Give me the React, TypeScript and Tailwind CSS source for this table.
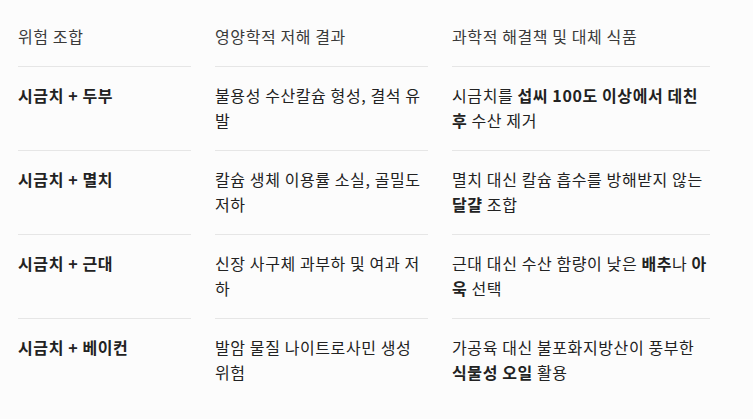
const rows = [
  {
    combo: "시금치 + 두부",
    effect: "불용성 수산칼슘 형성, 결석 유발",
    fix: (
      <>
        시금치를 <b className="font-bold">섭씨 100도 이상에서 데친 후</b> 수산 제거
      </>
    ),
  },
  {
    combo: "시금치 + 멸치",
    effect: "칼슘 생체 이용률 소실, 골밀도 저하",
    fix: (
      <>
        멸치 대신 칼슘 흡수를 방해받지 않는 <b className="font-bold">달걀</b> 조합
      </>
    ),
  },
  {
    combo: "시금치 + 근대",
    effect: "신장 사구체 과부하 및 여과 저하",
    fix: (
      <>
        근대 대신 수산 함량이 낮은 <b className="font-bold">배추</b>나 <b className="font-bold">아욱</b> 선택
      </>
    ),
  },
  {
    combo: "시금치 + 베이컨",
    effect: "발암 물질 나이트로사민 생성 위험",
    fix: (
      <>
        가공육 대신 불포화지방산이 풍부한 <b className="font-bold">식물성 오일</b> 활용
      </>
    ),
  },
];

const App = () => {
  return (
    <div
      className="min-h-screen bg-[#fcfcfc] text-[#222222] pl-[18px] pt-[8px] text-[16px] leading-[25.5px] tracking-[0.6px]"
      style={{ fontFamily: '"Noto Sans CJK KR", "Noto Sans", sans-serif' }}
    >
      <div className="grid grid-cols-[173px_213px_258px] gap-x-6">
        {/* Header */}
        <div className="py-4 border-b border-[#e6e6e6] text-[#3a3a3a]">위험 조합</div>
        <div className="py-4 border-b border-[#e6e6e6] text-[#3a3a3a]">영양학적 저해 결과</div>
        <div className="py-4 border-b border-[#e6e6e6] text-[#3a3a3a]">과학적 해결책 및 대체 식품</div>

        {/* Body */}
        {rows.map((row, i) => {
          const border = i < rows.length - 1 ? "border-b border-[#e6e6e6]" : "";
          return (
            <div key={i} className="contents">
              <div className={`py-4 font-bold ${border}`}>{row.combo}</div>
              <div className={`py-4 ${border}`}>{row.effect}</div>
              <div className={`py-4 ${border}`}>{row.fix}</div>
            </div>
          );
        })}
      </div>
    </div>
  );
};

export default App;
